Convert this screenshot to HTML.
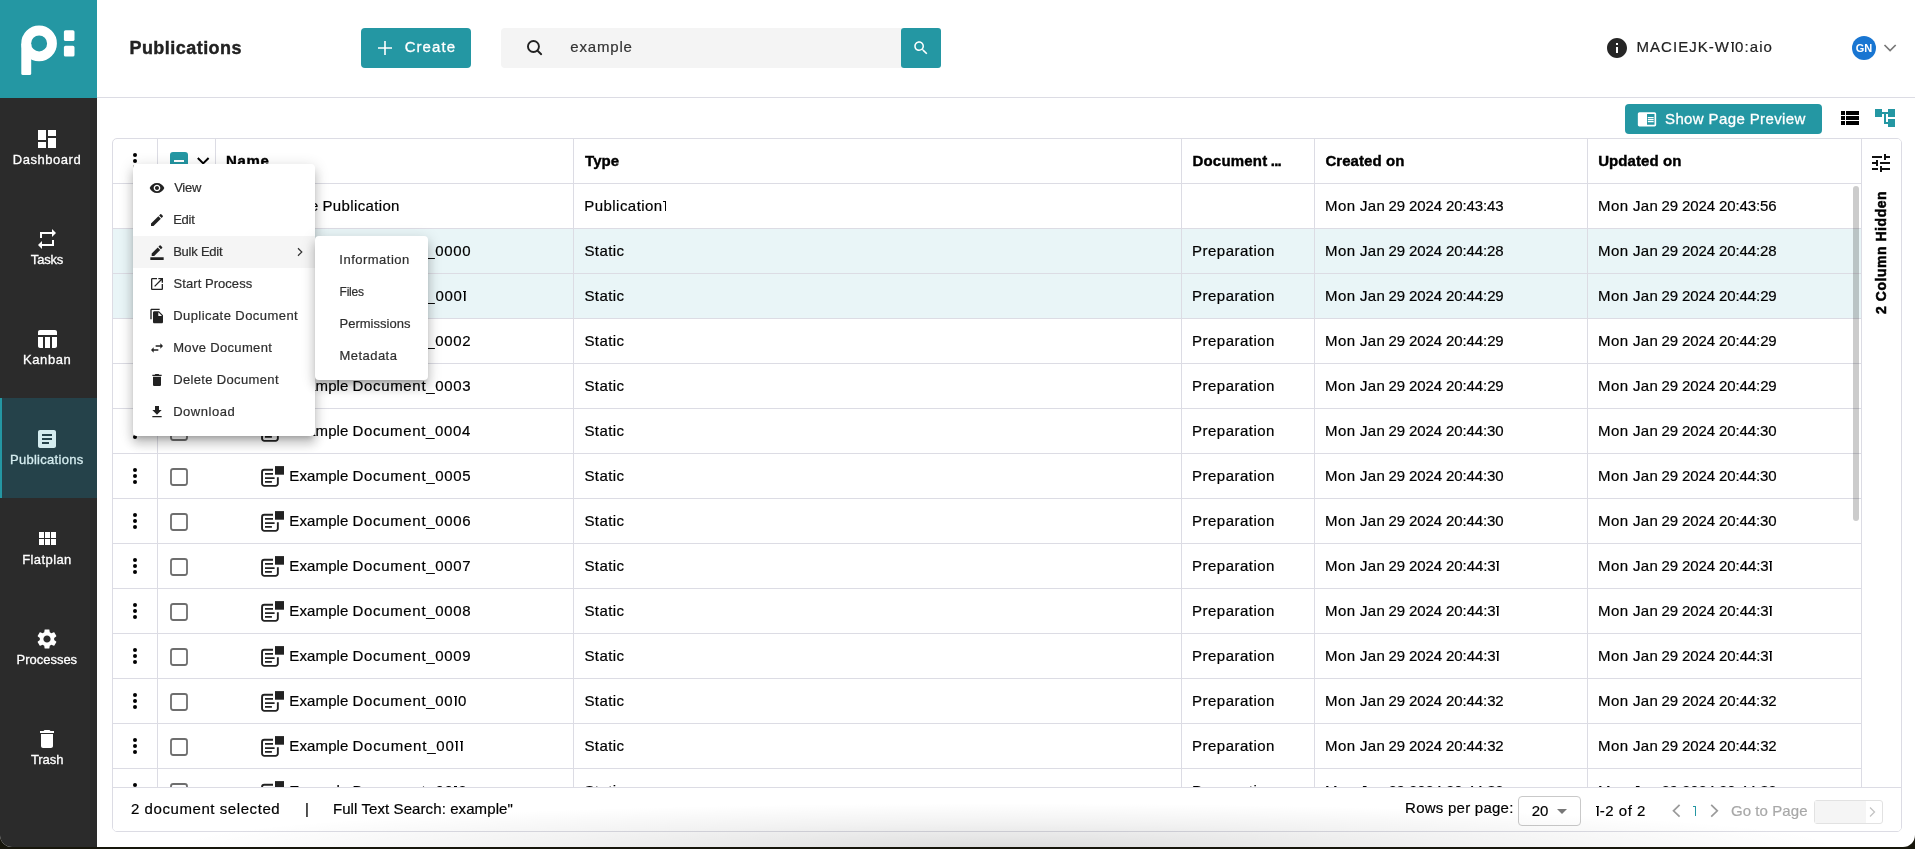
<!DOCTYPE html>
<html lang="en"><head><meta charset="utf-8"><title>Publications</title>
<style>
*{box-sizing:border-box;margin:0;padding:0}
html,body{width:1915px;height:849px;overflow:hidden;background:#17160c}
body{font-family:"Liberation Sans",sans-serif;color:#000;position:relative}
svg{display:block}
i.n{font-style:normal;font-size:0;letter-spacing:0}
i.n::before{content:"";display:inline-block;font-size:15px;width:.2em;height:.67em;background:linear-gradient(currentColor,currentColor) right top/.105em 100% no-repeat,linear-gradient(currentColor,currentColor) left top/100% .09em no-repeat;margin:0 .036em 0 .03em}
i.n.b::before{font-size:16px}
.abs{position:absolute}
.t{position:absolute;white-space:nowrap;line-height:1;-webkit-text-stroke:.2px}
#app{will-change:transform;position:absolute;left:0;top:0;width:1915px;height:847px;background:#fff;border-radius:0 0 12px 12px;overflow:hidden}
#side{position:absolute;left:0;top:0;width:97px;height:847px;background:#2b2b2b}
#logo{position:absolute;left:0;top:0;width:97px;height:98px;background:#2497a3}
.nav{position:absolute;left:0;width:97px;height:100px;color:#fff}
.nav.act{background:#25424a;box-shadow:inset 2px 0 0 #2497a3;color:#d4ecef}
#hdr{position:absolute;left:97px;top:0;width:1818px;height:98px;border-bottom:1px solid #dcdce4;background:#fff}
.btn{position:absolute;background:#2497a3;border-radius:4px;color:#fff}
#tbl{position:absolute;left:112px;top:138px;width:1790px;height:694px;border:1px solid #dcdce4;border-radius:5px;background:#fff;overflow:hidden}
.vl{position:absolute;width:1px;background:#dcdce4}
.hl{position:absolute;height:1px;background:#dcdce4}
.row{position:absolute;left:0;width:1749px;height:45px;border-bottom:1px solid #dcdce4}
.row.sel{background:#e9f5f7}
.menu{position:absolute;background:#fff;border-radius:4px;box-shadow:0 5px 5px -3px rgba(0,0,0,.2),0 8px 10px 1px rgba(0,0,0,.14),0 3px 14px 2px rgba(0,0,0,.12);color:#2e2e2e}
.mi{position:absolute;left:0;width:100%;height:32px}
.mi.hov{background:#f5f5f5}
</style></head>
<body>
<div id="app">
<div id="side">
<div id="logo"><svg width="97" height="98" viewBox="0 0 97 98"><circle cx="39.1" cy="43.4" r="12.9" fill="none" stroke="#fff" stroke-width="9.8"/><rect x="21.3" y="43" width="9.9" height="32" rx="1.6" fill="#fff"/><rect x="63.9" y="30.2" width="10.6" height="10.8" rx="1.6" fill="#fff"/><rect x="63.9" y="45.8" width="10.6" height="10.7" rx="1.6" fill="#fff"/></svg></div>
<div class="nav" style="top:98px"><svg class="ic" width="24" height="24" viewBox="0 0 24 24" style="position:absolute;left:35.00px;top:29.00px"><path fill="#fff" d="M3 13h8V3H3v10zm0 8h8v-6H3v6zm10 0h8V11h-8v10zm0-18v6h8V3h-8z"/></svg><div class="t" style="left:12.76px;top:55px;font-size:13px;letter-spacing:0.544px;-webkit-text-stroke:.3px">Dashboard</div></div>
<div class="nav" style="top:198px"><svg class="ic" width="24" height="24" viewBox="0 0 24 24" style="position:absolute;left:35.00px;top:29.00px"><path fill="#fff" d="M7 7h10v3l4-4-4-4v3H5v6h2V7zm10 10H7v-3l-4 4 4 4v-3h12v-6h-2v4z"/></svg><div class="t" style="left:30.84px;top:55px;font-size:13px;letter-spacing:-0.175px;-webkit-text-stroke:.3px">Tasks</div></div>
<div class="nav" style="top:298px"><svg class="ic" width="24" height="24" viewBox="0 0 24 24" style="position:absolute;left:35.00px;top:29.00px"><path fill="#fff" d="M10 10.02h5V21h-5zM17 21h3c1.1 0 2-.9 2-2v-9h-5v11zm3-18H5c-1.1 0-2 .9-2 2v3h19V5c0-1.1-.9-2-2-2zM3 19c0 1.1.9 2 2 2h3V10H3v9z"/></svg><div class="t" style="left:23.06px;top:55px;font-size:13px;letter-spacing:0.567px;-webkit-text-stroke:.3px">Kanban</div></div>
<div class="nav act" style="top:398px"><svg class="ic" width="24" height="24" viewBox="0 0 24 24" style="position:absolute;left:35.00px;top:29.00px"><path fill="#d4ecef" d="M19 3H5c-1.1 0-2 .9-2 2v14c0 1.1.9 2 2 2h14c1.1 0 2-.9 2-2V5c0-1.1-.9-2-2-2zm-5 14H7v-2h7v2zm3-4H7v-2h10v2zm0-4H7V7h10v2z"/></svg><div class="t" style="left:9.96px;top:55px;font-size:13px;letter-spacing:0.284px;-webkit-text-stroke:.3px">Publications</div></div>
<div class="nav" style="top:498px"><svg class="ic" width="24" height="24" viewBox="0 0 24 24" style="position:absolute;left:35.00px;top:29.00px"><path fill="#fff" d="M4 11h5V5H4v6zm0 7h5v-6H4v6zm6 0h5v-6h-5v6zm6 0h5v-6h-5v6zm-6-7h5V5h-5v6zm6-6v6h5V5h-5z"/></svg><div class="t" style="left:22.16px;top:55px;font-size:13px;letter-spacing:0.415px;-webkit-text-stroke:.3px">Flatplan</div></div>
<div class="nav" style="top:598px"><svg class="ic" width="24" height="24" viewBox="0 0 24 24" style="position:absolute;left:35.00px;top:29.00px"><path fill="#fff" d="M19.14 12.94c.04-.3.06-.61.06-.94 0-.32-.02-.64-.07-.94l2.03-1.58c.18-.14.23-.41.12-.61l-1.92-3.32c-.12-.22-.37-.29-.59-.22l-2.39.96c-.5-.38-1.03-.7-1.62-.94l-.36-2.54c-.04-.24-.24-.41-.48-.41h-3.84c-.24 0-.43.17-.47.41l-.36 2.54c-.59.24-1.13.57-1.62.94l-2.39-.96c-.22-.08-.47 0-.59.22L2.74 8.87c-.12.21-.08.47.12.61l2.03 1.58c-.05.3-.09.63-.09.94s.02.64.07.94l-2.03 1.58c-.18.14-.23.41-.12.61l1.92 3.32c.12.22.37.29.59.22l2.39-.96c.5.38 1.03.7 1.62.94l.36 2.54c.05.24.24.41.48.41h3.84c.24 0 .44-.17.47-.41l.36-2.54c.59-.24 1.13-.56 1.62-.94l2.39.96c.22.08.47 0 .59-.22l1.92-3.32c.12-.22.07-.47-.12-.61l-2.01-1.58zM12 15.6c-1.98 0-3.6-1.62-3.6-3.6s1.62-3.6 3.6-3.6 3.6 1.62 3.6 3.6-1.62 3.6-3.6 3.6z"/></svg><div class="t" style="left:16.56px;top:55px;font-size:13px;letter-spacing:-0.014px;-webkit-text-stroke:.3px">Processes</div></div>
<div class="nav" style="top:698px"><svg class="ic" width="24" height="24" viewBox="0 0 24 24" style="position:absolute;left:35.00px;top:29.00px"><path fill="#fff" d="M6 19c0 1.1.9 2 2 2h8c1.1 0 2-.9 2-2V7H6v12zM19 4h-3.5l-1-1h-5l-1 1H5v2h14V4z"/></svg><div class="t" style="left:30.94px;top:55px;font-size:13px;letter-spacing:-0.080px;-webkit-text-stroke:.3px">Trash</div></div>
</div>
<div id="hdr">
<div class="t" style="left:32.43px;top:39px;font-size:18px;letter-spacing:0.463px;font-weight:bold;-webkit-text-stroke:.4px;color:#222">Publications</div>
<div class="btn" style="left:264px;top:28px;width:110px;height:40px"><svg class="abs" style="left:16px;top:12px" width="16" height="16" viewBox="0 0 16 16"><path d="M8 1v14M1 8h14" stroke="#fff" stroke-width="1.6" fill="none"/></svg><div class="t" style="left:43.65px;top:11px;font-size:15px;letter-spacing:1.070px;-webkit-text-stroke:.3px">Create</div></div>
<div class="abs" style="left:404px;top:28px;width:401px;height:40px;background:#f4f4f4;border-radius:4px 0 0 4px"></div>
<svg class="abs" style="left:427px;top:37px" width="20" height="20" viewBox="0 0 20 20"><circle cx="9.45" cy="9.55" r="5.5" fill="none" stroke="#222" stroke-width="1.9"/><path d="M13.6 13.7l3.6 3.5" stroke="#222" stroke-width="1.9" stroke-linecap="round"/></svg>
<div class="t" style="left:473.30px;top:39px;font-size:15px;letter-spacing:0.817px;color:#333">example</div>
<div class="btn" style="left:804px;top:28px;width:40px;height:40px;border-radius:3px"><svg class="ic" width="18" height="18" viewBox="0 0 24 24" style="position:absolute;left:11.00px;top:11.00px"><path fill="#fff" d="M15.5 14h-.79l-.28-.27C15.41 12.59 16 11.11 16 9.5 16 5.91 13.09 3 9.5 3S3 5.91 3 9.5 5.91 16 9.5 16c1.61 0 3.09-.59 4.23-1.57l.27.28v.79l5 4.99L20.49 19l-4.99-5zm-6 0C7.01 14 5 11.99 5 9.5S7.01 5 9.5 5 14 7.01 14 9.5 11.99 14 9.5 14z"/></svg></div>
<svg class="ic" width="24" height="24" viewBox="0 0 24 24" style="position:absolute;left:1508.00px;top:36.00px"><path fill="#262626" d="M12 2C6.48 2 2 6.48 2 12s4.48 10 10 10 10-4.48 10-10S17.52 2 12 2zm1 15h-2v-6h2v6zm0-8h-2V7h2v2z"/></svg>
<div class="t" style="left:1539.40px;top:39px;font-size:15px;letter-spacing:1.059px;color:#222">MACIEJK-W<i class="n" style="margin-right:1.059px">1</i>0:aio</div>
<div class="abs" style="left:1755px;top:36px;width:24px;height:24px;border-radius:50%;background:#1976d2;color:#fff;font-size:11px;font-weight:bold;text-align:center;line-height:24px">GN</div>
<svg class="abs" style="left:1786px;top:43px" width="14" height="10" viewBox="0 0 14 10"><path d="M1.5 2l5.6 5.5L12.7 2" fill="none" stroke="#777" stroke-width="1.7"/></svg>
</div>
<div class="btn" style="left:1625px;top:104px;width:197px;height:30px"><svg class="ic" width="20" height="20" viewBox="0 0 24 24" style="position:absolute;left:12.00px;top:4.70px"><path fill="#fff" d="M13 12h7v1.5h-7zm0-2.5h7V11h-7zm0 5h7V16h-7zM21 4H3c-1.1 0-2 .9-2 2v13c0 1.1.9 2 2 2h18c1.1 0 2-.9 2-2V6c0-1.1-.9-2-2-2zm0 15h-9V6h9v13z"/></svg><div class="t" style="left:40.02px;top:7px;font-size:15px;letter-spacing:0.377px;-webkit-text-stroke:.3px">Show Page Preview</div></div>
<svg class="ic" width="24" height="24" viewBox="0 0 24 24" style="position:absolute;left:1837.90px;top:105.90px"><path fill="#000" d="M3 14h4v-4H3v4zm0 5h4v-4H3v4zM3 9h4V5H3v4zm5 5h13v-4H8v4zm0 5h13v-4H8v4zM8 5v4h13V5H8z"/></svg>
<svg class="ic" width="24" height="24" viewBox="0 0 24 24" style="position:absolute;left:1873.00px;top:106.00px"><path fill="#2497a3" d="M22 11V3h-7v3H9V3H2v8h7V8h2v10h4v3h7v-8h-7v3h-2V8h2v3z"/></svg>
<div id="tbl">
<div class="hl" style="left:0;top:44px;width:1749px"></div>
<div class="t" style="left:113.03px;top:14px;font-size:15px;letter-spacing:0.683px;font-weight:bold;-webkit-text-stroke:.4px">Name</div>
<div class="t" style="left:472.05px;top:14px;font-size:15px;letter-spacing:0.067px;font-weight:bold;-webkit-text-stroke:.4px">Type</div>
<div class="t" style="left:1079.43px;top:14px;font-size:15px;letter-spacing:0.211px;font-weight:bold;-webkit-text-stroke:.4px">Document</div>
<div class="t" style="left:1157.73px;top:14px;font-size:15px;letter-spacing:-0.725px;font-weight:bold;-webkit-text-stroke:.4px">...</div>
<div class="t" style="left:1212.40px;top:14px;font-size:15px;letter-spacing:0.067px;font-weight:bold;-webkit-text-stroke:.4px">Created on</div>
<div class="t" style="left:1485.20px;top:14px;font-size:15px;letter-spacing:0.078px;font-weight:bold;-webkit-text-stroke:.4px">Updated on</div>
<svg class="abs" style="left:18px;top:12px" width="8" height="20" viewBox="0 0 8 20"><circle cx="4" cy="3.9" r="2"/><circle cx="4" cy="10" r="2"/><circle cx="4" cy="16.1" r="2"/></svg>
<div class="abs" style="left:57px;top:13px;width:18px;height:18px;border-radius:3px;background:#2497a3"><div class="abs" style="left:4.4px;top:7.9px;width:9.5px;height:2px;background:#fff"></div></div>
<svg class="abs" style="left:83px;top:17px" width="14" height="10" viewBox="0 0 14 10"><path d="M1.8 2l5.4 5.4L12.6 2" fill="none" stroke="#000" stroke-width="2"/></svg>
<div class="row" style="top:45px"><svg class="abs" style="left:18px;top:12px" width="8" height="20" viewBox="0 0 8 20"><circle cx="4" cy="3.9" r="2"/><circle cx="4" cy="10" r="2"/><circle cx="4" cy="16.1" r="2"/></svg><svg class="abs" style="left:56px;top:13px" width="20" height="20" viewBox="0 0 20 20"><rect x="2" y="2" width="16" height="16" rx="2.2" fill="#fff" stroke="#6e6e6e" stroke-width="1.8"/></svg><div class="t" style="left:146.30px;top:14px;font-size:15px;letter-spacing:0.125px">Example</div><div class="t" style="left:209.50px;top:14px;font-size:15px;letter-spacing:0.355px">Publication</div><div class="t" style="left:471.30px;top:14px;font-size:15px;letter-spacing:0.450px">Publication<i class="n" style="margin-right:0.450px">1</i></div><div class="t" style="left:1212.10px;top:14px;font-size:15px;letter-spacing:0.379px">Mon Jan</div><div class="t" style="left:1275.45px;top:14px;font-size:15px;letter-spacing:-0.105px">29 2024 20:43:43</div><div class="t" style="left:1485.10px;top:14px;font-size:15px;letter-spacing:0.379px">Mon Jan</div><div class="t" style="left:1548.45px;top:14px;font-size:15px;letter-spacing:-0.105px">29 2024 20:43:56</div></div>
<div class="row sel" style="top:90px"><svg class="abs" style="left:18px;top:12px" width="8" height="20" viewBox="0 0 8 20"><circle cx="4" cy="3.9" r="2"/><circle cx="4" cy="10" r="2"/><circle cx="4" cy="16.1" r="2"/></svg><svg class="abs" style="left:56px;top:13px" width="20" height="20" viewBox="0 0 20 20"><rect x="2" y="2" width="16" height="16" rx="2.2" fill="#fff" stroke="#6e6e6e" stroke-width="1.8"/></svg><svg class="abs" style="left:147px;top:11px" width="26" height="24" viewBox="0 0 26 24"><path d="M13 4.75H4.3a2.25 2.25 0 0 0-2.25 2.25v11.6a2.25 2.25 0 0 0 2.25 2.25h11.3a2.25 2.25 0 0 0 2.25-2.25V12.2" fill="none" stroke="#222" stroke-width="1.9"/><path d="M5 8.9h8M5 13.1h9.6M5 16.8h6.9" stroke="#222" stroke-width="1.7" fill="none"/><rect x="15" y="1.1" width="9" height="8.6" fill="#222"/></svg><div class="t" style="left:176.30px;top:14px;font-size:15px;letter-spacing:0.125px">Example</div><div class="t" style="left:239.50px;top:14px;font-size:15px;letter-spacing:0.663px">Document_0000</div><div class="t" style="left:471.43px;top:14px;font-size:15px;letter-spacing:0.410px">Static</div><div class="t" style="left:1079.10px;top:14px;font-size:15px;letter-spacing:0.475px">Preparation</div><div class="t" style="left:1212.10px;top:14px;font-size:15px;letter-spacing:0.379px">Mon Jan</div><div class="t" style="left:1275.45px;top:14px;font-size:15px;letter-spacing:-0.105px">29 2024 20:44:28</div><div class="t" style="left:1485.10px;top:14px;font-size:15px;letter-spacing:0.379px">Mon Jan</div><div class="t" style="left:1548.45px;top:14px;font-size:15px;letter-spacing:-0.105px">29 2024 20:44:28</div></div>
<div class="row sel" style="top:135px"><svg class="abs" style="left:18px;top:12px" width="8" height="20" viewBox="0 0 8 20"><circle cx="4" cy="3.9" r="2"/><circle cx="4" cy="10" r="2"/><circle cx="4" cy="16.1" r="2"/></svg><svg class="abs" style="left:56px;top:13px" width="20" height="20" viewBox="0 0 20 20"><rect x="2" y="2" width="16" height="16" rx="2.2" fill="#fff" stroke="#6e6e6e" stroke-width="1.8"/></svg><svg class="abs" style="left:147px;top:11px" width="26" height="24" viewBox="0 0 26 24"><path d="M13 4.75H4.3a2.25 2.25 0 0 0-2.25 2.25v11.6a2.25 2.25 0 0 0 2.25 2.25h11.3a2.25 2.25 0 0 0 2.25-2.25V12.2" fill="none" stroke="#222" stroke-width="1.9"/><path d="M5 8.9h8M5 13.1h9.6M5 16.8h6.9" stroke="#222" stroke-width="1.7" fill="none"/><rect x="15" y="1.1" width="9" height="8.6" fill="#222"/></svg><div class="t" style="left:176.30px;top:14px;font-size:15px;letter-spacing:0.125px">Example</div><div class="t" style="left:239.50px;top:14px;font-size:15px;letter-spacing:0.688px">Document_000<i class="n" style="margin-right:0.688px">1</i></div><div class="t" style="left:471.43px;top:14px;font-size:15px;letter-spacing:0.410px">Static</div><div class="t" style="left:1079.10px;top:14px;font-size:15px;letter-spacing:0.475px">Preparation</div><div class="t" style="left:1212.10px;top:14px;font-size:15px;letter-spacing:0.379px">Mon Jan</div><div class="t" style="left:1275.45px;top:14px;font-size:15px;letter-spacing:-0.100px">29 2024 20:44:29</div><div class="t" style="left:1485.10px;top:14px;font-size:15px;letter-spacing:0.379px">Mon Jan</div><div class="t" style="left:1548.45px;top:14px;font-size:15px;letter-spacing:-0.100px">29 2024 20:44:29</div></div>
<div class="row" style="top:180px"><svg class="abs" style="left:18px;top:12px" width="8" height="20" viewBox="0 0 8 20"><circle cx="4" cy="3.9" r="2"/><circle cx="4" cy="10" r="2"/><circle cx="4" cy="16.1" r="2"/></svg><svg class="abs" style="left:56px;top:13px" width="20" height="20" viewBox="0 0 20 20"><rect x="2" y="2" width="16" height="16" rx="2.2" fill="#fff" stroke="#6e6e6e" stroke-width="1.8"/></svg><svg class="abs" style="left:147px;top:11px" width="26" height="24" viewBox="0 0 26 24"><path d="M13 4.75H4.3a2.25 2.25 0 0 0-2.25 2.25v11.6a2.25 2.25 0 0 0 2.25 2.25h11.3a2.25 2.25 0 0 0 2.25-2.25V12.2" fill="none" stroke="#222" stroke-width="1.9"/><path d="M5 8.9h8M5 13.1h9.6M5 16.8h6.9" stroke="#222" stroke-width="1.7" fill="none"/><rect x="15" y="1.1" width="9" height="8.6" fill="#222"/></svg><div class="t" style="left:176.30px;top:14px;font-size:15px;letter-spacing:0.125px">Example</div><div class="t" style="left:239.50px;top:14px;font-size:15px;letter-spacing:0.675px">Document_0002</div><div class="t" style="left:471.43px;top:14px;font-size:15px;letter-spacing:0.410px">Static</div><div class="t" style="left:1079.10px;top:14px;font-size:15px;letter-spacing:0.475px">Preparation</div><div class="t" style="left:1212.10px;top:14px;font-size:15px;letter-spacing:0.379px">Mon Jan</div><div class="t" style="left:1275.45px;top:14px;font-size:15px;letter-spacing:-0.100px">29 2024 20:44:29</div><div class="t" style="left:1485.10px;top:14px;font-size:15px;letter-spacing:0.379px">Mon Jan</div><div class="t" style="left:1548.45px;top:14px;font-size:15px;letter-spacing:-0.100px">29 2024 20:44:29</div></div>
<div class="row" style="top:225px"><svg class="abs" style="left:18px;top:12px" width="8" height="20" viewBox="0 0 8 20"><circle cx="4" cy="3.9" r="2"/><circle cx="4" cy="10" r="2"/><circle cx="4" cy="16.1" r="2"/></svg><svg class="abs" style="left:56px;top:13px" width="20" height="20" viewBox="0 0 20 20"><rect x="2" y="2" width="16" height="16" rx="2.2" fill="#fff" stroke="#6e6e6e" stroke-width="1.8"/></svg><svg class="abs" style="left:147px;top:11px" width="26" height="24" viewBox="0 0 26 24"><path d="M13 4.75H4.3a2.25 2.25 0 0 0-2.25 2.25v11.6a2.25 2.25 0 0 0 2.25 2.25h11.3a2.25 2.25 0 0 0 2.25-2.25V12.2" fill="none" stroke="#222" stroke-width="1.9"/><path d="M5 8.9h8M5 13.1h9.6M5 16.8h6.9" stroke="#222" stroke-width="1.7" fill="none"/><rect x="15" y="1.1" width="9" height="8.6" fill="#222"/></svg><div class="t" style="left:176.30px;top:14px;font-size:15px;letter-spacing:0.125px">Example</div><div class="t" style="left:239.50px;top:14px;font-size:15px;letter-spacing:0.669px">Document_0003</div><div class="t" style="left:471.43px;top:14px;font-size:15px;letter-spacing:0.410px">Static</div><div class="t" style="left:1079.10px;top:14px;font-size:15px;letter-spacing:0.475px">Preparation</div><div class="t" style="left:1212.10px;top:14px;font-size:15px;letter-spacing:0.379px">Mon Jan</div><div class="t" style="left:1275.45px;top:14px;font-size:15px;letter-spacing:-0.100px">29 2024 20:44:29</div><div class="t" style="left:1485.10px;top:14px;font-size:15px;letter-spacing:0.379px">Mon Jan</div><div class="t" style="left:1548.45px;top:14px;font-size:15px;letter-spacing:-0.100px">29 2024 20:44:29</div></div>
<div class="row" style="top:270px"><svg class="abs" style="left:18px;top:12px" width="8" height="20" viewBox="0 0 8 20"><circle cx="4" cy="3.9" r="2"/><circle cx="4" cy="10" r="2"/><circle cx="4" cy="16.1" r="2"/></svg><svg class="abs" style="left:56px;top:13px" width="20" height="20" viewBox="0 0 20 20"><rect x="2" y="2" width="16" height="16" rx="2.2" fill="#fff" stroke="#6e6e6e" stroke-width="1.8"/></svg><svg class="abs" style="left:147px;top:11px" width="26" height="24" viewBox="0 0 26 24"><path d="M13 4.75H4.3a2.25 2.25 0 0 0-2.25 2.25v11.6a2.25 2.25 0 0 0 2.25 2.25h11.3a2.25 2.25 0 0 0 2.25-2.25V12.2" fill="none" stroke="#222" stroke-width="1.9"/><path d="M5 8.9h8M5 13.1h9.6M5 16.8h6.9" stroke="#222" stroke-width="1.7" fill="none"/><rect x="15" y="1.1" width="9" height="8.6" fill="#222"/></svg><div class="t" style="left:176.30px;top:14px;font-size:15px;letter-spacing:0.125px">Example</div><div class="t" style="left:239.50px;top:14px;font-size:15px;letter-spacing:0.650px">Document_0004</div><div class="t" style="left:471.43px;top:14px;font-size:15px;letter-spacing:0.410px">Static</div><div class="t" style="left:1079.10px;top:14px;font-size:15px;letter-spacing:0.475px">Preparation</div><div class="t" style="left:1212.10px;top:14px;font-size:15px;letter-spacing:0.379px">Mon Jan</div><div class="t" style="left:1275.45px;top:14px;font-size:15px;letter-spacing:-0.110px">29 2024 20:44:30</div><div class="t" style="left:1485.10px;top:14px;font-size:15px;letter-spacing:0.379px">Mon Jan</div><div class="t" style="left:1548.45px;top:14px;font-size:15px;letter-spacing:-0.110px">29 2024 20:44:30</div></div>
<div class="row" style="top:315px"><svg class="abs" style="left:18px;top:12px" width="8" height="20" viewBox="0 0 8 20"><circle cx="4" cy="3.9" r="2"/><circle cx="4" cy="10" r="2"/><circle cx="4" cy="16.1" r="2"/></svg><svg class="abs" style="left:56px;top:13px" width="20" height="20" viewBox="0 0 20 20"><rect x="2" y="2" width="16" height="16" rx="2.2" fill="#fff" stroke="#6e6e6e" stroke-width="1.8"/></svg><svg class="abs" style="left:147px;top:11px" width="26" height="24" viewBox="0 0 26 24"><path d="M13 4.75H4.3a2.25 2.25 0 0 0-2.25 2.25v11.6a2.25 2.25 0 0 0 2.25 2.25h11.3a2.25 2.25 0 0 0 2.25-2.25V12.2" fill="none" stroke="#222" stroke-width="1.9"/><path d="M5 8.9h8M5 13.1h9.6M5 16.8h6.9" stroke="#222" stroke-width="1.7" fill="none"/><rect x="15" y="1.1" width="9" height="8.6" fill="#222"/></svg><div class="t" style="left:176.30px;top:14px;font-size:15px;letter-spacing:0.125px">Example</div><div class="t" style="left:239.50px;top:14px;font-size:15px;letter-spacing:0.669px">Document_0005</div><div class="t" style="left:471.43px;top:14px;font-size:15px;letter-spacing:0.410px">Static</div><div class="t" style="left:1079.10px;top:14px;font-size:15px;letter-spacing:0.475px">Preparation</div><div class="t" style="left:1212.10px;top:14px;font-size:15px;letter-spacing:0.379px">Mon Jan</div><div class="t" style="left:1275.45px;top:14px;font-size:15px;letter-spacing:-0.110px">29 2024 20:44:30</div><div class="t" style="left:1485.10px;top:14px;font-size:15px;letter-spacing:0.379px">Mon Jan</div><div class="t" style="left:1548.45px;top:14px;font-size:15px;letter-spacing:-0.110px">29 2024 20:44:30</div></div>
<div class="row" style="top:360px"><svg class="abs" style="left:18px;top:12px" width="8" height="20" viewBox="0 0 8 20"><circle cx="4" cy="3.9" r="2"/><circle cx="4" cy="10" r="2"/><circle cx="4" cy="16.1" r="2"/></svg><svg class="abs" style="left:56px;top:13px" width="20" height="20" viewBox="0 0 20 20"><rect x="2" y="2" width="16" height="16" rx="2.2" fill="#fff" stroke="#6e6e6e" stroke-width="1.8"/></svg><svg class="abs" style="left:147px;top:11px" width="26" height="24" viewBox="0 0 26 24"><path d="M13 4.75H4.3a2.25 2.25 0 0 0-2.25 2.25v11.6a2.25 2.25 0 0 0 2.25 2.25h11.3a2.25 2.25 0 0 0 2.25-2.25V12.2" fill="none" stroke="#222" stroke-width="1.9"/><path d="M5 8.9h8M5 13.1h9.6M5 16.8h6.9" stroke="#222" stroke-width="1.7" fill="none"/><rect x="15" y="1.1" width="9" height="8.6" fill="#222"/></svg><div class="t" style="left:176.30px;top:14px;font-size:15px;letter-spacing:0.125px">Example</div><div class="t" style="left:239.50px;top:14px;font-size:15px;letter-spacing:0.669px">Document_0006</div><div class="t" style="left:471.43px;top:14px;font-size:15px;letter-spacing:0.410px">Static</div><div class="t" style="left:1079.10px;top:14px;font-size:15px;letter-spacing:0.475px">Preparation</div><div class="t" style="left:1212.10px;top:14px;font-size:15px;letter-spacing:0.379px">Mon Jan</div><div class="t" style="left:1275.45px;top:14px;font-size:15px;letter-spacing:-0.110px">29 2024 20:44:30</div><div class="t" style="left:1485.10px;top:14px;font-size:15px;letter-spacing:0.379px">Mon Jan</div><div class="t" style="left:1548.45px;top:14px;font-size:15px;letter-spacing:-0.110px">29 2024 20:44:30</div></div>
<div class="row" style="top:405px"><svg class="abs" style="left:18px;top:12px" width="8" height="20" viewBox="0 0 8 20"><circle cx="4" cy="3.9" r="2"/><circle cx="4" cy="10" r="2"/><circle cx="4" cy="16.1" r="2"/></svg><svg class="abs" style="left:56px;top:13px" width="20" height="20" viewBox="0 0 20 20"><rect x="2" y="2" width="16" height="16" rx="2.2" fill="#fff" stroke="#6e6e6e" stroke-width="1.8"/></svg><svg class="abs" style="left:147px;top:11px" width="26" height="24" viewBox="0 0 26 24"><path d="M13 4.75H4.3a2.25 2.25 0 0 0-2.25 2.25v11.6a2.25 2.25 0 0 0 2.25 2.25h11.3a2.25 2.25 0 0 0 2.25-2.25V12.2" fill="none" stroke="#222" stroke-width="1.9"/><path d="M5 8.9h8M5 13.1h9.6M5 16.8h6.9" stroke="#222" stroke-width="1.7" fill="none"/><rect x="15" y="1.1" width="9" height="8.6" fill="#222"/></svg><div class="t" style="left:176.30px;top:14px;font-size:15px;letter-spacing:0.125px">Example</div><div class="t" style="left:239.50px;top:14px;font-size:15px;letter-spacing:0.675px">Document_0007</div><div class="t" style="left:471.43px;top:14px;font-size:15px;letter-spacing:0.410px">Static</div><div class="t" style="left:1079.10px;top:14px;font-size:15px;letter-spacing:0.475px">Preparation</div><div class="t" style="left:1212.10px;top:14px;font-size:15px;letter-spacing:0.379px">Mon Jan</div><div class="t" style="left:1275.45px;top:14px;font-size:15px;letter-spacing:-0.090px">29 2024 20:44:3<i class="n" style="margin-right:-0.090px">1</i></div><div class="t" style="left:1485.10px;top:14px;font-size:15px;letter-spacing:0.379px">Mon Jan</div><div class="t" style="left:1548.45px;top:14px;font-size:15px;letter-spacing:-0.090px">29 2024 20:44:3<i class="n" style="margin-right:-0.090px">1</i></div></div>
<div class="row" style="top:450px"><svg class="abs" style="left:18px;top:12px" width="8" height="20" viewBox="0 0 8 20"><circle cx="4" cy="3.9" r="2"/><circle cx="4" cy="10" r="2"/><circle cx="4" cy="16.1" r="2"/></svg><svg class="abs" style="left:56px;top:13px" width="20" height="20" viewBox="0 0 20 20"><rect x="2" y="2" width="16" height="16" rx="2.2" fill="#fff" stroke="#6e6e6e" stroke-width="1.8"/></svg><svg class="abs" style="left:147px;top:11px" width="26" height="24" viewBox="0 0 26 24"><path d="M13 4.75H4.3a2.25 2.25 0 0 0-2.25 2.25v11.6a2.25 2.25 0 0 0 2.25 2.25h11.3a2.25 2.25 0 0 0 2.25-2.25V12.2" fill="none" stroke="#222" stroke-width="1.9"/><path d="M5 8.9h8M5 13.1h9.6M5 16.8h6.9" stroke="#222" stroke-width="1.7" fill="none"/><rect x="15" y="1.1" width="9" height="8.6" fill="#222"/></svg><div class="t" style="left:176.30px;top:14px;font-size:15px;letter-spacing:0.125px">Example</div><div class="t" style="left:239.50px;top:14px;font-size:15px;letter-spacing:0.669px">Document_0008</div><div class="t" style="left:471.43px;top:14px;font-size:15px;letter-spacing:0.410px">Static</div><div class="t" style="left:1079.10px;top:14px;font-size:15px;letter-spacing:0.475px">Preparation</div><div class="t" style="left:1212.10px;top:14px;font-size:15px;letter-spacing:0.379px">Mon Jan</div><div class="t" style="left:1275.45px;top:14px;font-size:15px;letter-spacing:-0.090px">29 2024 20:44:3<i class="n" style="margin-right:-0.090px">1</i></div><div class="t" style="left:1485.10px;top:14px;font-size:15px;letter-spacing:0.379px">Mon Jan</div><div class="t" style="left:1548.45px;top:14px;font-size:15px;letter-spacing:-0.090px">29 2024 20:44:3<i class="n" style="margin-right:-0.090px">1</i></div></div>
<div class="row" style="top:495px"><svg class="abs" style="left:18px;top:12px" width="8" height="20" viewBox="0 0 8 20"><circle cx="4" cy="3.9" r="2"/><circle cx="4" cy="10" r="2"/><circle cx="4" cy="16.1" r="2"/></svg><svg class="abs" style="left:56px;top:13px" width="20" height="20" viewBox="0 0 20 20"><rect x="2" y="2" width="16" height="16" rx="2.2" fill="#fff" stroke="#6e6e6e" stroke-width="1.8"/></svg><svg class="abs" style="left:147px;top:11px" width="26" height="24" viewBox="0 0 26 24"><path d="M13 4.75H4.3a2.25 2.25 0 0 0-2.25 2.25v11.6a2.25 2.25 0 0 0 2.25 2.25h11.3a2.25 2.25 0 0 0 2.25-2.25V12.2" fill="none" stroke="#222" stroke-width="1.9"/><path d="M5 8.9h8M5 13.1h9.6M5 16.8h6.9" stroke="#222" stroke-width="1.7" fill="none"/><rect x="15" y="1.1" width="9" height="8.6" fill="#222"/></svg><div class="t" style="left:176.30px;top:14px;font-size:15px;letter-spacing:0.125px">Example</div><div class="t" style="left:239.50px;top:14px;font-size:15px;letter-spacing:0.675px">Document_0009</div><div class="t" style="left:471.43px;top:14px;font-size:15px;letter-spacing:0.410px">Static</div><div class="t" style="left:1079.10px;top:14px;font-size:15px;letter-spacing:0.475px">Preparation</div><div class="t" style="left:1212.10px;top:14px;font-size:15px;letter-spacing:0.379px">Mon Jan</div><div class="t" style="left:1275.45px;top:14px;font-size:15px;letter-spacing:-0.090px">29 2024 20:44:3<i class="n" style="margin-right:-0.090px">1</i></div><div class="t" style="left:1485.10px;top:14px;font-size:15px;letter-spacing:0.379px">Mon Jan</div><div class="t" style="left:1548.45px;top:14px;font-size:15px;letter-spacing:-0.090px">29 2024 20:44:3<i class="n" style="margin-right:-0.090px">1</i></div></div>
<div class="row" style="top:540px"><svg class="abs" style="left:18px;top:12px" width="8" height="20" viewBox="0 0 8 20"><circle cx="4" cy="3.9" r="2"/><circle cx="4" cy="10" r="2"/><circle cx="4" cy="16.1" r="2"/></svg><svg class="abs" style="left:56px;top:13px" width="20" height="20" viewBox="0 0 20 20"><rect x="2" y="2" width="16" height="16" rx="2.2" fill="#fff" stroke="#6e6e6e" stroke-width="1.8"/></svg><svg class="abs" style="left:147px;top:11px" width="26" height="24" viewBox="0 0 26 24"><path d="M13 4.75H4.3a2.25 2.25 0 0 0-2.25 2.25v11.6a2.25 2.25 0 0 0 2.25 2.25h11.3a2.25 2.25 0 0 0 2.25-2.25V12.2" fill="none" stroke="#222" stroke-width="1.9"/><path d="M5 8.9h8M5 13.1h9.6M5 16.8h6.9" stroke="#222" stroke-width="1.7" fill="none"/><rect x="15" y="1.1" width="9" height="8.6" fill="#222"/></svg><div class="t" style="left:176.30px;top:14px;font-size:15px;letter-spacing:0.125px">Example</div><div class="t" style="left:239.50px;top:14px;font-size:15px;letter-spacing:0.675px">Document_00<i class="n" style="margin-right:0.675px">1</i>0</div><div class="t" style="left:471.43px;top:14px;font-size:15px;letter-spacing:0.410px">Static</div><div class="t" style="left:1079.10px;top:14px;font-size:15px;letter-spacing:0.475px">Preparation</div><div class="t" style="left:1212.10px;top:14px;font-size:15px;letter-spacing:0.379px">Mon Jan</div><div class="t" style="left:1275.45px;top:14px;font-size:15px;letter-spacing:-0.100px">29 2024 20:44:32</div><div class="t" style="left:1485.10px;top:14px;font-size:15px;letter-spacing:0.379px">Mon Jan</div><div class="t" style="left:1548.45px;top:14px;font-size:15px;letter-spacing:-0.100px">29 2024 20:44:32</div></div>
<div class="row" style="top:585px"><svg class="abs" style="left:18px;top:12px" width="8" height="20" viewBox="0 0 8 20"><circle cx="4" cy="3.9" r="2"/><circle cx="4" cy="10" r="2"/><circle cx="4" cy="16.1" r="2"/></svg><svg class="abs" style="left:56px;top:13px" width="20" height="20" viewBox="0 0 20 20"><rect x="2" y="2" width="16" height="16" rx="2.2" fill="#fff" stroke="#6e6e6e" stroke-width="1.8"/></svg><svg class="abs" style="left:147px;top:11px" width="26" height="24" viewBox="0 0 26 24"><path d="M13 4.75H4.3a2.25 2.25 0 0 0-2.25 2.25v11.6a2.25 2.25 0 0 0 2.25 2.25h11.3a2.25 2.25 0 0 0 2.25-2.25V12.2" fill="none" stroke="#222" stroke-width="1.9"/><path d="M5 8.9h8M5 13.1h9.6M5 16.8h6.9" stroke="#222" stroke-width="1.7" fill="none"/><rect x="15" y="1.1" width="9" height="8.6" fill="#222"/></svg><div class="t" style="left:176.30px;top:14px;font-size:15px;letter-spacing:0.125px">Example</div><div class="t" style="left:239.50px;top:14px;font-size:15px;letter-spacing:0.788px">Document_00<i class="n" style="margin-right:0.788px">1</i><i class="n" style="margin-right:0.788px">1</i></div><div class="t" style="left:471.43px;top:14px;font-size:15px;letter-spacing:0.410px">Static</div><div class="t" style="left:1079.10px;top:14px;font-size:15px;letter-spacing:0.475px">Preparation</div><div class="t" style="left:1212.10px;top:14px;font-size:15px;letter-spacing:0.379px">Mon Jan</div><div class="t" style="left:1275.45px;top:14px;font-size:15px;letter-spacing:-0.100px">29 2024 20:44:32</div><div class="t" style="left:1485.10px;top:14px;font-size:15px;letter-spacing:0.379px">Mon Jan</div><div class="t" style="left:1548.45px;top:14px;font-size:15px;letter-spacing:-0.100px">29 2024 20:44:32</div></div>
<div class="row" style="top:630px"><svg class="abs" style="left:18px;top:12px" width="8" height="20" viewBox="0 0 8 20"><circle cx="4" cy="3.9" r="2"/><circle cx="4" cy="10" r="2"/><circle cx="4" cy="16.1" r="2"/></svg><svg class="abs" style="left:56px;top:13px" width="20" height="20" viewBox="0 0 20 20"><rect x="2" y="2" width="16" height="16" rx="2.2" fill="#fff" stroke="#6e6e6e" stroke-width="1.8"/></svg><svg class="abs" style="left:147px;top:11px" width="26" height="24" viewBox="0 0 26 24"><path d="M13 4.75H4.3a2.25 2.25 0 0 0-2.25 2.25v11.6a2.25 2.25 0 0 0 2.25 2.25h11.3a2.25 2.25 0 0 0 2.25-2.25V12.2" fill="none" stroke="#222" stroke-width="1.9"/><path d="M5 8.9h8M5 13.1h9.6M5 16.8h6.9" stroke="#222" stroke-width="1.7" fill="none"/><rect x="15" y="1.1" width="9" height="8.6" fill="#222"/></svg><div class="t" style="left:176.30px;top:14px;font-size:15px;letter-spacing:0.125px">Example</div><div class="t" style="left:239.50px;top:14px;font-size:15px;letter-spacing:0.688px">Document_00<i class="n" style="margin-right:0.688px">1</i>2</div><div class="t" style="left:471.43px;top:14px;font-size:15px;letter-spacing:0.410px">Static</div><div class="t" style="left:1079.10px;top:14px;font-size:15px;letter-spacing:0.475px">Preparation</div><div class="t" style="left:1212.10px;top:14px;font-size:15px;letter-spacing:0.379px">Mon Jan</div><div class="t" style="left:1275.45px;top:14px;font-size:15px;letter-spacing:-0.100px">29 2024 20:44:32</div><div class="t" style="left:1485.10px;top:14px;font-size:15px;letter-spacing:0.379px">Mon Jan</div><div class="t" style="left:1548.45px;top:14px;font-size:15px;letter-spacing:-0.100px">29 2024 20:44:32</div></div>
<div class="vl" style="left:44px;top:0px;height:649px"></div>
<div class="vl" style="left:102px;top:0px;height:44px"></div>
<div class="vl" style="left:460px;top:0px;height:649px"></div>
<div class="vl" style="left:1068px;top:0px;height:649px"></div>
<div class="vl" style="left:1201px;top:0px;height:649px"></div>
<div class="vl" style="left:1474px;top:0px;height:649px"></div>
<div class="vl" style="left:1748px;top:0px;height:649px"></div>
<div class="abs" style="left:1740px;top:47px;width:6px;height:335px;border-radius:3px;background:rgba(0,0,0,.2)"></div>
<div class="abs" style="left:1749px;top:0;width:39px;height:649px;background:#fff"></div>
<svg class="ic" width="24" height="24" viewBox="0 0 24 24" style="position:absolute;left:1756.00px;top:12.00px"><path fill="#111" d="M3 17v2h6v-2H3zM3 5v2h10V5H3zm10 16v-2h8v-2h-8v-2h-2v6h2zM7 9v2H3v2h4v2h2V9H7zm14 4v-2H11v2h10zm-6-4h2V7h4V5h-4V3h-2v6z"/></svg>
<div class="t" style="left:1760.8px;top:175.08px;font-size:14px;font-weight:bold;-webkit-text-stroke:.5px;letter-spacing:0.534px;transform-origin:0 0;transform:rotate(-90deg) ">2 Column Hidden</div>
<div class="abs" style="left:0;top:648px;width:1788px;height:45px;background:#fff;border-top:1px solid #dcdce4"><div class="t" style="left:17.95px;top:13px;font-size:15px;letter-spacing:0.571px">2 document selected</div><div class="t" style="left:192.02px;top:13px;font-size:15px;letter-spacing:0.000px">|</div><div class="t" style="left:219.90px;top:13px;font-size:15px;letter-spacing:0.092px">Full Text Search: example"</div><div class="t" style="left:1292.10px;top:12px;font-size:15px;letter-spacing:0.244px">Rows per page:</div><div class="abs" style="left:1405px;top:8px;width:63px;height:30px;border:1px solid #c9c9c9;border-radius:4px"></div><div class="t" style="left:1418.65px;top:15px;font-size:15px;letter-spacing:0.125px">20</div><svg class="ic" width="24" height="24" viewBox="0 0 24 24" style="position:absolute;left:1437.00px;top:11.20px"><path fill="#777" d="M7 10l5 5 5-5z"/></svg><div class="t" style="left:1482.28px;top:15px;font-size:15px;letter-spacing:0.514px"><i class="n" style="margin-right:0.514px">1</i>-2 of 2</div><svg class="abs" style="left:1557px;top:15px" width="12" height="16" viewBox="0 0 12 16"><path d="M9.6 1.9L3.5 7.8l6.1 5.9" fill="none" stroke="#9a9a9a" stroke-width="1.7"/></svg><div class="t" style="left:1579.98px;top:15px;font-size:15px;letter-spacing:0.000px;color:#2497a3"><i class="n" style="margin-right:0.000px">1</i></div><svg class="abs" style="left:1595px;top:15px" width="12" height="16" viewBox="0 0 12 16"><path d="M3.2 1.9l6.1 5.9-6.1 5.9" fill="none" stroke="#9a9a9a" stroke-width="1.7"/></svg><div class="t" style="left:1617.95px;top:15px;font-size:15px;letter-spacing:0.072px;color:#a8a8a8">Go to Page</div><div class="abs" style="left:1700.5px;top:11.5px;width:69px;height:24px;border:1px solid #e2e2e2;border-radius:3px;background:#fff"><div class="abs" style="left:0;top:0;width:51px;height:22px;background:#f5f5f5"></div><svg class="abs" style="left:53px;top:5px" width="8" height="12" viewBox="0 0 8 12"><path d="M2 1.5L6.5 6 2 10.5" fill="none" stroke="#c4c4c4" stroke-width="1.3"/></svg></div></div>
</div>
<div class="abs" style="left:97px;top:803px;width:1818px;height:44px;background:radial-gradient(ellipse 46% 100% at 50% 100%,rgba(0,0,0,.13),rgba(0,0,0,.05) 55%,rgba(0,0,0,0) 100%);pointer-events:none"></div>
<div class="menu" style="left:133px;top:164px;width:182px;height:272px">
<div class="mi" style="top:8px"><svg class="ic" width="16" height="16" viewBox="0 0 24 24" style="position:absolute;left:16.00px;top:8.00px"><path fill="#222" d="M12 4.5C7 4.5 2.73 7.61 1 12c1.73 4.39 6 7.5 11 7.5s9.27-3.11 11-7.5c-1.73-4.39-6-7.5-11-7.5zM12 17c-2.76 0-5-2.24-5-5s2.24-5 5-5 5 2.24 5 5-2.24 5-5 5zm0-8c-1.66 0-3 1.34-3 3s1.34 3 3 3 3-1.34 3-3-1.34-3-3-3z"/></svg><div class="t" style="left:41.20px;top:9px;font-size:13px;letter-spacing:-0.283px">View</div></div>
<div class="mi" style="top:40px"><svg class="ic" width="16" height="16" viewBox="0 0 24 24" style="position:absolute;left:16.00px;top:8.00px"><path fill="#222" d="M3 17.25V21h3.75L17.81 9.94l-3.75-3.75L3 17.25zM20.71 7.04c.39-.39.39-1.02 0-1.41l-2.34-2.34c-.39-.39-1.02-.39-1.41 0l-1.83 1.83 3.75 3.75 1.83-1.83z"/></svg><div class="t" style="left:40.16px;top:9px;font-size:13px;letter-spacing:-0.273px">Edit</div></div>
<div class="mi hov" style="top:72px"><svg class="ic" width="16" height="16" viewBox="0 0 24 24" style="position:absolute;left:16.00px;top:8.00px"><path fill="#222" d="M22 24H2v-4h20v4zM13.06 5.19l3.75 3.75L7.75 18H4v-3.75l9.06-9.06zm4.82 2.68l-3.75-3.75 1.83-1.83c.39-.39 1.02-.39 1.41 0l2.34 2.34c.39.39.39 1.02 0 1.41l-1.83 1.83z"/></svg><div class="t" style="left:40.16px;top:9px;font-size:13px;letter-spacing:-0.231px">Bulk Edit</div><svg class="abs" style="left:161px;top:10px" width="12" height="12" viewBox="0 0 12 12"><path d="M4 2.3L7.8 6 4 9.7" fill="none" stroke="#333" stroke-width="1.2"/></svg></div>
<div class="mi" style="top:104px"><svg class="ic" width="16" height="16" viewBox="0 0 24 24" style="position:absolute;left:16.00px;top:8.00px"><path fill="#222" d="M19 19H5V5h7V3H5c-1.11 0-2 .9-2 2v14c0 1.1.89 2 2 2h14c1.1 0 2-.9 2-2v-7h-2v7zM14 3v2h3.59l-9.83 9.83 1.41 1.41L19 6.41V10h2V3h-7z"/></svg><div class="t" style="left:40.61px;top:9px;font-size:13px;letter-spacing:0.045px">Start Process</div></div>
<div class="mi" style="top:136px"><svg class="ic" width="16" height="16" viewBox="0 0 24 24" style="position:absolute;left:16.00px;top:8.00px"><path fill="#222" d="M16 1H4c-1.1 0-2 .9-2 2v14h2V3h12V1zm-1 4l6 6v10c0 1.1-.9 2-2 2H7.99C6.89 23 6 22.1 6 21l.01-14c0-1.1.89-2 1.99-2h7zm-1 7h5.5L14 6.5V12z"/></svg><div class="t" style="left:40.16px;top:9px;font-size:13px;letter-spacing:0.438px">Duplicate Document</div></div>
<div class="mi" style="top:168px"><svg class="ic" width="16" height="16" viewBox="0 0 24 24" style="position:absolute;left:16.00px;top:8.00px"><path fill="#222" d="M6.99 11L3 15l3.99 4v-3H14v-2H6.99v-3zM21 9l-3.99-4v3H10v2h7.01v3L21 9z"/></svg><div class="t" style="left:40.16px;top:9px;font-size:13px;letter-spacing:0.333px">Move Document</div></div>
<div class="mi" style="top:200px"><svg class="ic" width="16" height="16" viewBox="0 0 24 24" style="position:absolute;left:16.00px;top:8.00px"><path fill="#222" d="M6 19c0 1.1.9 2 2 2h8c1.1 0 2-.9 2-2V7H6v12zM19 4h-3.5l-1-1h-5l-1 1H5v2h14V4z"/></svg><div class="t" style="left:40.16px;top:9px;font-size:13px;letter-spacing:0.351px">Delete Document</div></div>
<div class="mi" style="top:232px"><svg class="ic" width="16" height="16" viewBox="0 0 24 24" style="position:absolute;left:16.00px;top:8.00px"><path fill="#222" d="M19 9h-4V3H9v6H5l7 7 7-7zM5 18v2h14v-2H5z"/></svg><div class="t" style="left:40.16px;top:9px;font-size:13px;letter-spacing:0.548px">Download</div></div>
</div>
<div class="menu" style="left:315px;top:236px;width:113px;height:144px">
<div class="mi" style="top:8px"><div class="t" style="left:24.33px;top:9px;font-size:13px;letter-spacing:0.485px">Information</div></div>
<div class="mi" style="top:40px"><div class="t" style="left:24.54px;top:10px;font-size:12px;letter-spacing:-0.210px">Files</div></div>
<div class="mi" style="top:72px"><div class="t" style="left:24.46px;top:9px;font-size:13px;letter-spacing:0.021px">Permissions</div></div>
<div class="mi" style="top:104px"><div class="t" style="left:24.46px;top:9px;font-size:13px;letter-spacing:0.466px">Metadata</div></div>
</div>
</div>
</body></html>
